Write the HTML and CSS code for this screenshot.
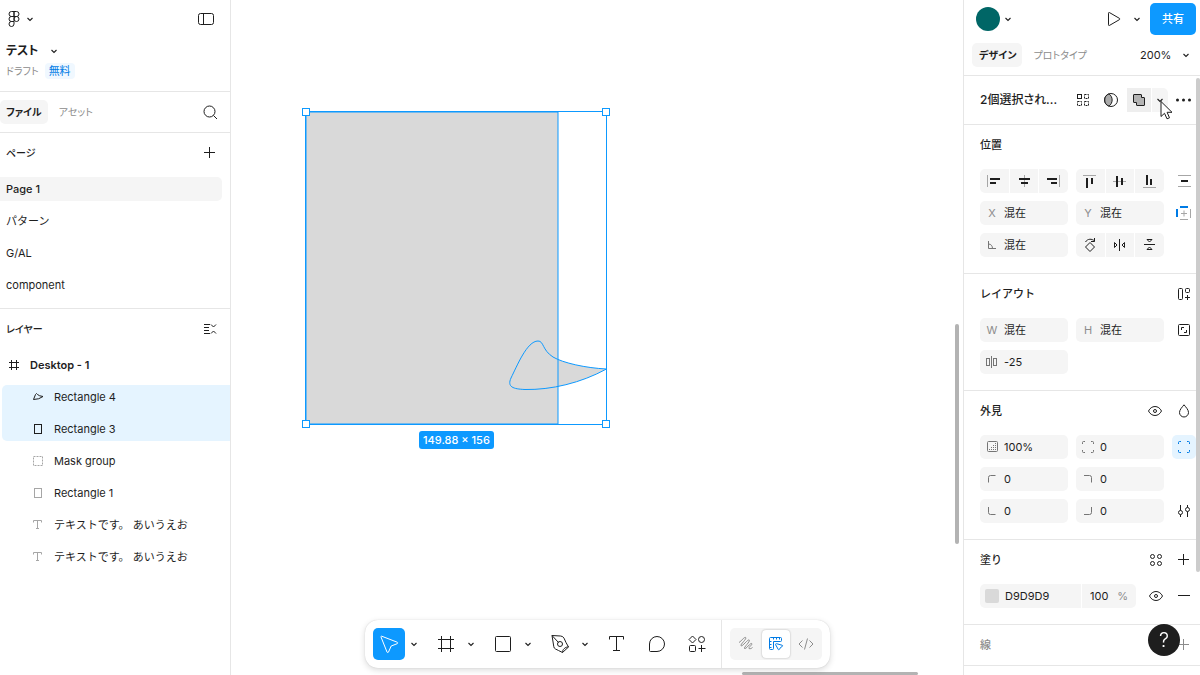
FILE: index.html
```html
<!DOCTYPE html>
<html lang="ja">

<head>
    <meta charset="UTF-8">
    <meta name="viewport" content="width=device-width, initial-scale=1.0">
    <title>テスト</title>
    <link rel="stylesheet" href="styles.css">
</head>

<body>
    <!-- Left sidebar -->
    <aside class="sidebar">
        <header class="file-header">
            <div class="logo-row">
                <button class="menu-button" aria-label="Menu">
                    <svg width="12" height="18" viewBox="0 0 12 18"><path d="M6 1.500H3.500a2.500 2.500 0 0 0 0 5H6zM6 1.500h2.500a2.500 2.500 0 0 1 0 5H6zM6 6.500H3.500a2.500 2.500 0 0 0 0 5H6zM6 11.500H3.500A2.500 2.500 0 1 0 6 14z" /><circle cx="8.500" cy="9" r="2.500" /></svg>
                    <svg class="chevron" width="8" height="8" viewBox="0 0 8 8"><path d="M1.500 3L4 5.500 6.500 3" /></svg>
                </button>
                <button class="icon-button" aria-label="Toggle sidebar">
                    <svg width="24" height="24" viewBox="0 0 24 24"><rect x="4.500" y="6.500" width="15" height="11" rx="2" /><path d="M9.500 6.500v11" /></svg>
                </button>
            </div>
            <button class="file-name">
                テスト
                <svg class="chevron" width="8" height="8" viewBox="0 0 8 8"><path d="M1.500 3L4 5.500 6.500 3" /></svg>
            </button>
            <div class="file-meta">
                <span class="folder">ドラフト</span>
                <span class="plan">無料</span>
            </div>
        </header>

        <div class="sidebar-tabs">
            <button class="tab active">ファイル</button>
            <button class="tab">アセット</button>
            <button class="icon-button" aria-label="Search">
                <svg width="24" height="24" viewBox="0 0 24 24"><circle cx="11.500" cy="11.500" r="5.500" /><path d="M15.500 15.500l3.500 3.500" /></svg>
            </button>
        </div>

        <section class="pages">
            <div class="sidebar-heading">
                <h2>ページ</h2>
                <button class="icon-button" aria-label="Add page">
                    <svg width="24" height="24" viewBox="0 0 24 24"><path d="M6 11.500h11M11.500 6v11" /></svg>
                </button>
            </div>
            <nav class="page-list">
                <a href="#" class="page current">Page 1</a>
                <a href="#" class="page">パターン</a>
                <a href="#" class="page">G/AL</a>
                <a href="#" class="page">component</a>
            </nav>
        </section>

        <section class="layers">
            <div class="sidebar-heading">
                <h2>レイヤー</h2>
                <button class="icon-button" aria-label="Collapse layers">
                    <svg width="24" height="24" viewBox="0 0 24 24"><path d="M6 7.500h6M6 10.500h5M6 13.500h5M6 16.500h6M13 7.500l2.500 2.500L18 7.500M13 16.500l2.500-2.500 2.500 2.500" /></svg>
                </button>
            </div>
            <div class="layer-list">
                <button class="layer frame">
                    <svg width="12" height="12" viewBox="0 0 12 12"><path d="M3.500 1v10M8.500 1v10M1 3.500h10M1 8.500h10" /></svg>
                    Desktop - 1
                </button>
                <div class="layer-group selected">
                    <button class="layer">
                        <svg width="12" height="12" viewBox="0 0 12 12"><path d="M1.500 8.500L3.500 3.500Q4.500 1.500 5.500 3.500 7 5 11 5.500 7 8.500 1.500 8.500z" /></svg>
                        Rectangle 4
                    </button>
                    <button class="layer">
                        <svg width="12" height="12" viewBox="0 0 12 12"><rect x="2.500" y="1.500" width="7" height="9" /></svg>
                        Rectangle 3
                    </button>
                </div>
                <div class="layer-group">
                    <button class="layer muted">
                        <svg width="12" height="12" viewBox="0 0 12 12"><rect x="1.500" y="1.500" width="9" height="9" stroke-dasharray="2 1" /></svg>
                        Mask group
                    </button>
                    <button class="layer muted">
                        <svg width="12" height="12" viewBox="0 0 12 12"><rect x="2.500" y="1.500" width="7" height="9" /></svg>
                        Rectangle 1
                    </button>
                    <button class="layer muted">
                        <svg width="12" height="12" viewBox="0 0 12 12"><path d="M1.500 3.500v-2h8v2M5.500 1.500v8M4 9.500h3" /></svg>
                        テキストです。 あいうえお
                    </button>
                    <button class="layer muted">
                        <svg width="12" height="12" viewBox="0 0 12 12"><path d="M1.500 3.500v-2h8v2M5.500 1.500v8M4 9.500h3" /></svg>
                        テキストです。 あいうえお
                    </button>
                </div>
            </div>
        </section>
    </aside>

    <!-- Canvas -->
    <main class="canvas">
        <svg class="artwork" width="310" height="322" viewBox="0 0 310 322">
            <path class="fill" d="M305.500 262C285 261 262 256 252 250C241 243 243 234 237 234C226 234 216 259 210 271C206 280 212 282 224 282.500C250 283 280 276 305.500 262z" />
            <rect class="fill" x="5" y="5" width="252" height="312" />
            <rect class="outline" x="5" y="5" width="252" height="312" />
            <path class="outline" d="M305.500 262C285 261 262 256 252 250C241 243 243 234 237 234C226 234 216 259 210 271C206 280 212 282 224 282.500C250 283 280 276 305.500 262z" />
            <rect class="bounds" x="4.500" y="4.500" width="301" height="313" />
            <g class="handles">
                <rect x="1.500" y="1.500" width="7" height="7" />
                <rect x="301.500" y="1.500" width="7" height="7" />
                <rect x="1.500" y="313.500" width="7" height="7" />
                <rect x="301.500" y="313.500" width="7" height="7" />
            </g>
        </svg>
        <div class="size-label">149.88 × 156</div>
        <div class="scroll-y"></div>
        <div class="scroll-x"></div>

        <div class="toolbar">
            <button class="tool active" aria-label="Move">
                <svg width="24" height="24" viewBox="0 0 24 24"><path d="M4.700 4.200l15.500 6a.800.800 0 0 1 0 1.500l-6 2.300-2.700 6a.800.800 0 0 1-1.500 0L4 5a.600.600 0 0 1 .700-.800z" /></svg>
            </button>
            <button class="tool-menu" aria-label="Move tools"><svg class="chevron" width="8" height="8" viewBox="0 0 8 8"><path d="M1.500 3L4 5.500 6.500 3" /></svg></button>
            <button class="tool" aria-label="Frame">
                <svg width="24" height="24" viewBox="0 0 24 24"><path d="M7.500 4v16M16.500 4v16M4 7.500h16M4 16.500h16" /></svg>
            </button>
            <button class="tool-menu" aria-label="Frame tools"><svg class="chevron" width="8" height="8" viewBox="0 0 8 8"><path d="M1.500 3L4 5.500 6.500 3" /></svg></button>
            <button class="tool" aria-label="Rectangle">
                <svg width="24" height="24" viewBox="0 0 24 24"><rect x="4.500" y="4.500" width="15" height="15" rx="1" /></svg>
            </button>
            <button class="tool-menu" aria-label="Shape tools"><svg class="chevron" width="8" height="8" viewBox="0 0 8 8"><path d="M1.500 3L4 5.500 6.500 3" /></svg></button>
            <button class="tool" aria-label="Pen">
                <svg width="24" height="24" viewBox="0 0 24 24"><path d="M4 3.500l8.500.500a4 4 0 0 1 3.500 2.200l2 4.300 2.500 4.500-6 5.500-4-2-3-1.500a3 3 0 0 1-1.700-2.300zM4 3.500l6.500 7M14.500 20.500c-.500-2.500 3-6 6-5.500" /><circle cx="12" cy="12" r="2.500" /></svg>
            </button>
            <button class="tool-menu" aria-label="Pen tools"><svg class="chevron" width="8" height="8" viewBox="0 0 8 8"><path d="M1.500 3L4 5.500 6.500 3" /></svg></button>
            <button class="tool" aria-label="Text">
                <svg width="24" height="24" viewBox="0 0 24 24"><path d="M4.500 7.500v-3h14v3M11.500 4.500v14M8 18.500h7" /></svg>
            </button>
            <button class="tool" aria-label="Comment">
                <svg width="24" height="24" viewBox="0 0 24 24"><path d="M12 4.500a7.500 7.500 0 1 1 0 15H5.500a1 1 0 0 1-1-1V12A7.500 7.500 0 0 1 12 4.500z" /></svg>
            </button>
            <button class="tool" aria-label="Actions">
                <svg width="24" height="24" viewBox="0 0 24 24"><path d="M7.500 4l3.500 3.500L7.500 11 4 7.500zM13.500 16.500h7M16.500 13v7" /><circle cx="16.500" cy="7.500" r="3" /><rect x="4.500" y="13.500" width="6" height="6" rx="1" /></svg>
            </button>
            <div class="mode-switch">
                <button class="mode" aria-label="Draw">
                    <svg width="24" height="24" viewBox="0 0 24 24"><path d="M5 10.500C7.500 9 10.500 4.500 11.700 5.500 13 7 6 12.500 7 13.700 8.500 15 13.800 6.800 15.200 8 16.500 9.500 9.500 15.500 10.500 16.500 12 17.500 16.500 10.500 17.700 11.500 19 12.500 14 15.500 15 16.500 16 17 17.500 16.500 18.500 15.500" /></svg>
                </button>
                <button class="mode active" aria-label="Design">
                    <svg width="24" height="24" viewBox="0 0 24 24"><path d="M6.500 5.500h10a1 1 0 0 1 1 1v2a1 1 0 0 1-1 1h-7v7a1 1 0 0 1-1 1h-2a1 1 0 0 1-1-1v-10a1 1 0 0 1 1-1zM9.500 7.500v-2M12.500 7.500v-2M15.500 7.500v-2M7.500 9.500h-2M7.500 12.500h-2M7.500 15.500h-2M11.500 12.500c0-.500.500-1 1-.800l5.500 1.500c.800.200.800 1 .200 1.300l-1.700 1-1 1.800c-.400.600-1.200.600-1.400-.100z" /></svg>
                </button>
                <button class="mode" aria-label="Dev mode">
                    <svg width="24" height="24" viewBox="0 0 24 24"><path d="M8.500 8.500L5 12l3.500 3.500M15.500 8.500L19 12l-3.500 3.500M13.500 6.500l-3 11" /></svg>
                </button>
            </div>
        </div>
    </main>

    <!-- Properties panel -->
    <aside class="inspector">
        <div class="account-row">
            <button class="account" aria-label="Account">
                <span class="avatar"></span>
                <svg class="chevron" width="8" height="8" viewBox="0 0 8 8"><path d="M1.500 3L4 5.500 6.500 3" /></svg>
            </button>
            <button class="icon-button" aria-label="Present">
                <svg width="24" height="24" viewBox="0 0 24 24"><path d="M6.500 6.200v11.600a.700.700 0 0 0 1 .600l10-5.800a.700.700 0 0 0 0-1.200l-10-5.800a.700.700 0 0 0-1 .600z" /></svg>
            </button>
            <button class="small-menu" aria-label="Present options"><svg class="chevron" width="8" height="8" viewBox="0 0 8 8"><path d="M1.500 3L4 5.500 6.500 3" /></svg></button>
            <button class="share">共有</button>
        </div>
        <div class="inspector-tabs">
            <button class="tab active">デザイン</button>
            <button class="tab">プロトタイプ</button>
            <label class="zoom">
                <select aria-label="Zoom">
                    <option>200%</option>
                </select>
                <svg class="chevron" width="8" height="8" viewBox="0 0 8 8"><path d="M1.500 3L4 5.500 6.500 3" /></svg>
            </label>
        </div>

        <div class="properties">
            <div class="scroll-thumb"></div>
            <div class="selection-row">
                <h1>2個選択され...</h1>
                <button class="icon-button" aria-label="Create component set">
                    <svg width="24" height="24" viewBox="0 0 24 24"><rect x="6.500" y="6.500" width="4" height="4" /><g stroke-dasharray="2 1"><rect x="13.500" y="6.500" width="4" height="4" /><rect x="6.500" y="13.500" width="4" height="4" /><rect x="13.500" y="13.500" width="4" height="4" /></g></svg>
                </button>
                <button class="icon-button" aria-label="Mask">
                    <svg width="24" height="24" viewBox="0 0 24 24"><circle cx="12" cy="12" r="6.500" /><path fill="#aaa" d="M10 5.900a6.500 6.500 0 0 0 0 12.200A7.500 7.500 0 0 0 10 5.900z" /></svg>
                </button>
                <div class="boolean">
                    <button class="icon-button" aria-label="Union">
                        <svg width="24" height="24" viewBox="0 0 24 24"><path fill="#b3b3b3" d="M7 6.500h7a.500.500 0 0 1 .500.500v2.500H17a.500.500 0 0 1 .500.500v7a.500.500 0 0 1-.500.500h-7a.500.500 0 0 1-.500-.500v-2.500H7a.500.500 0 0 1-.500-.500V7a.500.500 0 0 1 .500-.500z" /></svg>
                    </button>
                    <button class="small-menu" aria-label="Boolean operations"><svg class="chevron" width="8" height="8" viewBox="0 0 8 8"><path d="M1.500 3L4 5.500 6.500 3" /></svg></button>
                    <svg class="cursor" width="13" height="20" viewBox="0 0 13 20"><path d="M1 1.500v15l3.500-3.200L7 18.800l2.500-1-2.400-5.500H12z" /></svg>
                </div>
                <button class="icon-button" aria-label="More">
                    <svg class="solid" width="24" height="24" viewBox="0 0 24 24"><circle cx="5.500" cy="12" r="1.500" /><circle cx="11.500" cy="12" r="1.500" /><circle cx="17.500" cy="12" r="1.500" /></svg>
                </button>
            </div>

            <section class="property-section">
                <div class="section-heading">
                    <h2>位置</h2>
                </div>
                <div class="fields">
                    <div class="segments">
                        <button aria-label="Align left"><svg width="24" height="24" viewBox="0 0 24 24"><path class="faint" d="M5.500 6v12" /><path class="thick" d="M8 10h10M8 14h6" /></svg></button>
                        <button aria-label="Align center"><svg width="24" height="24" viewBox="0 0 24 24"><path class="faint" d="M12.500 6v12" /><path class="thick" d="M7 10h11M9 14h7" /></svg></button>
                        <button aria-label="Align right"><svg width="24" height="24" viewBox="0 0 24 24"><path class="faint" d="M18.500 6v12" /><path class="thick" d="M6 10h10M10 14h6" /></svg></button>
                    </div>
                    <div class="segments">
                        <button aria-label="Align top"><svg width="24" height="24" viewBox="0 0 24 24"><path class="faint" d="M5 6.500h13" /><path class="thick" d="M9 9v10M14 9v6" /></svg></button>
                        <button aria-label="Align middle"><svg width="24" height="24" viewBox="0 0 24 24"><path class="faint" d="M5 12.500h13" /><path class="thick" d="M9 7v11M14 9v7" /></svg></button>
                        <button aria-label="Align bottom"><svg width="24" height="24" viewBox="0 0 24 24"><path class="faint" d="M6 18.500h13" /><path class="thick" d="M10 6v10M14 10v6" /></svg></button>
                    </div>
                    <button class="icon-button" aria-label="Distribute">
                        <svg width="24" height="24" viewBox="0 0 24 24"><path class="faint" d="M6 6.500h13M6 17.500h13" /><path class="thick" d="M9 12h7" /></svg>
                    </button>

                    <label class="field"><span class="prefix">X</span><input type="text" value="混在"></label>
                    <label class="field"><span class="prefix">Y</span><input type="text" value="混在"></label>
                    <button class="icon-button" aria-label="Constraints">
                        <svg width="24" height="24" viewBox="0 0 24 24"><path class="faint" d="M9 12.500h6M12 9.500v6M18.500 8v9M8 18.500h8" /><path class="blue thick" d="M5 8v8M8 6h8" /></svg>
                    </button>

                    <label class="field"><svg width="24" height="24" viewBox="0 0 24 24" aria-label="Rotation"><path d="M8.500 8v7.500H16M8.500 11c2.500 0 4 2 4 4.500" /></svg><input type="text" value="混在"></label>
                    <div class="segments">
                        <button aria-label="Rotate"><svg width="24" height="24" viewBox="0 0 24 24"><path d="M12 9.500l4.500 4.500-4.500 4.500L7.500 14zM7.500 9c2-3.500 6.500-3.500 9-1M16.500 5v3.500H13" /></svg></button>
                        <button aria-label="Flip horizontal"><svg width="24" height="24" viewBox="0 0 24 24"><path d="M11.500 6v12M6.500 9.500v5l2.500-2.500zM16.500 9.500v5L14 12z" /></svg></button>
                        <button aria-label="Flip vertical"><svg width="24" height="24" viewBox="0 0 24 24"><path d="M7 11.500h11M10 6.500h5L12.500 9zM10 16.500h5L12.500 14z" /></svg></button>
                    </div>
                </div>
            </section>

            <section class="property-section">
                <div class="section-heading">
                    <h2>レイアウト</h2>
                    <button class="icon-button" aria-label="Auto layout">
                        <svg width="24" height="24" viewBox="0 0 24 24"><rect x="6.500" y="6.500" width="4" height="11" rx="1" /><rect x="13.500" y="6.500" width="4" height="4" rx="1" /><path d="M15.500 13v5M13 15.500h5" /></svg>
                    </button>
                </div>
                <div class="fields">
                    <label class="field"><span class="prefix">W</span><input type="text" value="混在"></label>
                    <label class="field"><span class="prefix">H</span><input type="text" value="混在"></label>
                    <button class="icon-button" aria-label="Lock ratio">
                        <svg width="24" height="24" viewBox="0 0 24 24"><rect x="6.500" y="6.500" width="11" height="11" rx="1" /><path d="M9.500 12V9.500H12M14.500 12v2.500H12" /></svg>
                    </button>
                    <label class="field"><svg width="24" height="24" viewBox="0 0 24 24" aria-label="Spacing"><path d="M11.500 6v12" /><rect x="6.500" y="8.500" width="3" height="7" /><rect x="13.500" y="8.500" width="3" height="7" /></svg><input type="text" value="-25"></label>
                </div>
            </section>

            <section class="property-section">
                <div class="section-heading">
                    <h2>外見</h2>
                    <button class="icon-button" aria-label="Visibility">
                        <svg width="24" height="24" viewBox="0 0 24 24"><path d="M4.500 12c1.300-2.700 3.700-4.500 6.500-4.500s5.200 1.800 6.500 4.500c-1.300 2.700-3.700 4.500-6.500 4.500S5.800 14.700 4.500 12z" /><circle cx="11" cy="12" r="1.500" /></svg>
                    </button>
                    <button class="icon-button" aria-label="Blend mode">
                        <svg width="24" height="24" viewBox="0 0 24 24"><path d="M12 5.800c-2 2.500-4.500 5-4.500 7.700a4.500 4.500 0 0 0 9 0c0-2.700-2.500-5.200-4.500-7.700z" /></svg>
                    </button>
                </div>
                <div class="fields">
                    <label class="field"><svg width="24" height="24" viewBox="0 0 24 24" aria-label="Opacity"><rect x="7.500" y="6.500" width="10" height="10" rx="1" /><path stroke-dasharray="1 1" d="M15.500 8v8M13.500 10v6M11.500 12v4M9.500 14v2" /></svg><input type="text" value="100%"></label>
                    <label class="field"><svg width="24" height="24" viewBox="0 0 24 24" aria-label="Corner radius"><path d="M6.500 9V7.500a1 1 0 0 1 1-1H9M15 6.500h1.500a1 1 0 0 1 1 1V9M17.500 15v1.500a1 1 0 0 1-1 1H15M9 17.500H7.500a1 1 0 0 1-1-1V15" /></svg><input type="text" value="0"></label>
                    <button class="icon-button on" aria-label="Individual corners">
                        <svg width="24" height="24" viewBox="0 0 24 24"><path d="M6.500 9V7.500a1 1 0 0 1 1-1H9M15 6.500h1.500a1 1 0 0 1 1 1V9M17.500 15v1.500a1 1 0 0 1-1 1H15M9 17.500H7.500a1 1 0 0 1-1-1V15" /></svg>
                    </button>
                    <label class="field"><svg width="24" height="24" viewBox="0 0 24 24" aria-label="Top left"><path d="M8.500 15.500v-5a2 2 0 0 1 2-2h5" /></svg><input type="text" value="0"></label>
                    <label class="field"><svg width="24" height="24" viewBox="0 0 24 24" aria-label="Top right"><path d="M8 8.500h5.500a2 2 0 0 1 2 2v5" /></svg><input type="text" value="0"></label>
                    <span></span>
                    <label class="field"><svg width="24" height="24" viewBox="0 0 24 24" aria-label="Bottom left"><path d="M8.500 8v5.500a2 2 0 0 0 2 2h5" /></svg><input type="text" value="0"></label>
                    <label class="field"><svg width="24" height="24" viewBox="0 0 24 24" aria-label="Bottom right"><path d="M8 15.500h5.500a2 2 0 0 0 2-2V8" /></svg><input type="text" value="0"></label>
                    <button class="icon-button" aria-label="Corner smoothing">
                        <svg width="24" height="24" viewBox="0 0 24 24"><path d="M8.500 6v5.500M8.500 15.500V18M15.500 6v2.500M15.500 12.500V18" /><circle cx="8.500" cy="13.500" r="2" /><circle cx="15.500" cy="10.500" r="2" /></svg>
                    </button>
                </div>
            </section>

            <section class="property-section">
                <div class="section-heading">
                    <h2>塗り</h2>
                    <button class="icon-button" aria-label="Styles">
                        <svg width="24" height="24" viewBox="0 0 24 24"><circle cx="8.500" cy="8.500" r="2" /><circle cx="15.500" cy="8.500" r="2" /><circle cx="8.500" cy="15.500" r="2" /><circle cx="15.500" cy="15.500" r="2" /></svg>
                    </button>
                    <button class="icon-button" aria-label="Add fill">
                        <svg width="24" height="24" viewBox="0 0 24 24"><path d="M6 11.500h11M11.500 6v11" /></svg>
                    </button>
                </div>
                <div class="fill-row">
                    <label class="field color"><span class="swatch"></span><input type="text" value="D9D9D9" aria-label="Color"></label>
                    <label class="field opacity"><input type="text" value="100" aria-label="Opacity"><span class="unit">%</span></label>
                    <button class="icon-button" aria-label="Toggle fill">
                        <svg width="24" height="24" viewBox="0 0 24 24"><path d="M5.500 12c1.300-2.700 3.700-4.500 6.500-4.500s5.200 1.800 6.500 4.500c-1.300 2.700-3.700 4.500-6.500 4.500S6.800 14.700 5.500 12z" /><circle cx="12" cy="12" r="1.500" /></svg>
                    </button>
                    <button class="icon-button" aria-label="Remove fill">
                        <svg width="24" height="24" viewBox="0 0 24 24"><path d="M6 11.500h12" /></svg>
                    </button>
                </div>
            </section>

            <section class="property-section empty">
                <div class="section-heading">
                    <h2>線</h2>
                    <button class="icon-button" aria-label="Add stroke">
                        <svg width="24" height="24" viewBox="0 0 24 24"><path d="M6 11.500h11M11.500 6v11" /></svg>
                    </button>
                </div>
            </section>
        </div>
    </aside>

    <button class="help" aria-label="Help">?</button>
</body>

</html>
```
FILE: styles.css
```css
* {
    box-sizing: border-box;
}

body {
    display: flex;
    height: 100vh;
    margin: 0;
    overflow: hidden;
    font-family: Inter, "Noto Sans CJK JP", sans-serif;
    font-size: 11px;
    line-height: 16px;
    color: #1e1e1e;
    background-color: #fff;
}

h1,
h2 {
    margin: 0;
    font-size: 11px;
    font-weight: 500;
}

button,
input,
select {
    margin: 0;
    padding: 0;
    border: none;
    background: none;
    color: inherit;
    font: inherit;
}

svg {
    display: block;
    flex: none;
    fill: none;
    stroke: currentColor;
    stroke-width: 1;
}

svg.solid {
    fill: currentColor;
    stroke: none;
}

.chevron {
    stroke-width: 1.1;
}

.faint {
    stroke: #a6a6a6;
}

.thick {
    stroke-width: 2;
}

.blue {
    stroke: #007be5;
}

.icon-button,
.small-menu,
.tool,
.tool-menu,
.mode {
    display: flex;
    flex: none;
    align-items: center;
    justify-content: center;
}

.icon-button {
    width: 24px;
    height: 24px;
    border-radius: 5px;
}

.icon-button.on {
    background-color: #e5f4ff;
    color: #007be5;
}

.small-menu {
    width: 16px;
    height: 24px;
}

/* Proportional kana for the compact labels */
.tab,
.file-name,
.folder,
.sidebar-heading h2,
.selection-row h1 {
    font-feature-settings: "palt";
}

.tab {
    height: 24px;
    padding: 0 6px 0 7px;
    border-radius: 5px;
    color: #8c8c8c;
    font-size: 10px;
    white-space: nowrap;
}

.tab.active {
    background-color: #f5f5f5;
    color: #1e1e1e;
    font-weight: 600;
}

/* Left sidebar */
.sidebar {
    flex: none;
    width: 231px;
    border-right: 1px solid #e6e6e6;
}

.file-header {
    padding: 0 12px 12px 6px;
    border-bottom: 1px solid #e6e6e6;
}

.logo-row {
    display: flex;
    align-items: center;
    justify-content: space-between;
    height: 38px;
}

.menu-button {
    display: flex;
    align-items: center;
    gap: 6px;
    padding-left: 2px;
}

.file-name {
    display: flex;
    align-items: center;
    gap: 12px;
    height: 18px;
    margin: 4px 0 3px;
    font-size: 12px;
    font-weight: 600;
}

.file-meta {
    display: flex;
    align-items: center;
    gap: 6px;
    color: #8c8c8c;
}

.folder {
    font-size: 10px;
}

.plan {
    padding: 0 4px;
    border-radius: 4px;
    background-color: #f0f8ff;
    color: #007be5;
}

.sidebar-tabs {
    display: flex;
    align-items: center;
    gap: 4px;
    height: 41px;
    padding-right: 8px;
    border-bottom: 1px solid #e6e6e6;
}

.sidebar-tabs .tab.active {
    padding-left: 6px;
}

.sidebar-tabs .icon-button {
    margin-left: auto;
}

.pages {
    padding: 0 8px 11px 0;
    border-bottom: 1px solid #e6e6e6;
}

.sidebar-heading {
    display: flex;
    align-items: center;
    justify-content: space-between;
    height: 40px;
    padding-left: 6px;
}

.sidebar-heading h2 {
    font-size: 10px;
}

.layers .sidebar-heading {
    padding-right: 8px;
}

.page-list {
    display: grid;
    gap: 8px;
    padding-top: 4px;
}

.page {
    padding: 4px 6px;
    border-radius: 0 5px 5px 0;
    color: inherit;
    text-decoration: none;
}

.page.current {
    background-color: #f5f5f5;
    font-weight: 500;
}

.layer-list,
.layer-group {
    display: grid;
    gap: 8px;
}

.layer-list {
    padding-top: 4px;
}

.layer-group {
    margin-left: 2px;
    border-radius: 5px 0 0 5px;
}

.layer-group.selected {
    background-color: #e5f4ff;
}

.layer {
    display: flex;
    align-items: center;
    gap: 10px;
    height: 24px;
    padding-left: 30px;
    white-space: nowrap;
}

.layer.frame {
    padding-left: 8px;
    font-weight: 600;
}

.layer.muted svg {
    color: #a6a6a6;
}

/* Canvas */
.canvas {
    position: relative;
    flex: 1;
    min-width: 0;
    overflow: hidden;
}

.artwork {
    position: absolute;
    top: 107px;
    left: 70px;
}

.fill {
    fill: #d9d9d9;
    stroke: none;
}

.outline,
.bounds {
    stroke: #0d99ff;
}

.handles {
    fill: #fff;
    stroke: #0d99ff;
}

.size-label {
    position: absolute;
    top: 431px;
    left: 188px;
    padding: 1px 4px;
    border-radius: 3px;
    background-color: #0d99ff;
    color: #fff;
    font-weight: 500;
}

.scroll-y,
.scroll-x {
    position: absolute;
    border-radius: 2px;
    background-color: #b3b3b3;
}

.scroll-y {
    top: 324px;
    right: 4px;
    width: 4px;
    height: 220px;
}

.scroll-x {
    bottom: 0;
    left: 511px;
    width: 176px;
    height: 3px;
}

.toolbar {
    position: absolute;
    right: 0;
    bottom: 7px;
    left: 1px;
    display: flex;
    align-items: center;
    width: max-content;
    height: 48px;
    margin: 0 auto;
    padding: 0 8px;
    border-radius: 13px;
    background-color: #fff;
    box-shadow: 0 0 1px rgba(0, 0, 0, 0.2), 0 2px 6px rgba(0, 0, 0, 0.15);
}

.tool {
    width: 32px;
    height: 32px;
    margin-right: 8px;
    border-radius: 5px;
}

.tool:has(+ .tool-menu) {
    margin-right: 0;
}

.tool.active {
    background-color: #0d99ff;
    color: #fff;
}

.tool-menu {
    width: 17px;
    height: 32px;
    margin-right: 8px;
}

.mode-switch {
    position: relative;
    display: flex;
    gap: 2px;
    margin-left: 9px;
    padding: 2px;
    border-radius: 5px;
    background-color: #f5f5f5;
}

.mode-switch::before {
    content: "";
    position: absolute;
    top: -8px;
    bottom: -8px;
    left: -9px;
    width: 1px;
    background-color: #e6e6e6;
}

.mode {
    width: 28px;
    height: 28px;
    border-radius: 4px;
    color: #8c8c8c;
}

.mode.active {
    background-color: #fff;
    color: #007be5;
    box-shadow: 0 0 2px rgba(0, 0, 0, 0.3);
}

/* Properties panel */
.inspector {
    flex: none;
    width: 237px;
    border-left: 1px solid #e6e6e6;
}

.account-row {
    display: flex;
    align-items: center;
    height: 38px;
    padding: 0 4px 0 12px;
}

.account {
    display: flex;
    align-items: center;
    gap: 4px;
    margin-right: auto;
}

.avatar {
    width: 24px;
    height: 24px;
    border-radius: 50%;
    background-color: #006666;
}

.account-row .small-menu {
    margin: 0 5px 0 3px;
}

.share {
    width: 46px;
    height: 32px;
    border-radius: 5px;
    background-color: #0d99ff;
    color: #fff;
    font-weight: 500;
}

.inspector-tabs {
    display: flex;
    align-items: center;
    gap: 4px;
    height: 38px;
    padding: 0 10px 4px 8px;
    border-bottom: 1px solid #e6e6e6;
}

.zoom {
    display: flex;
    align-items: center;
    gap: 10px;
    margin-left: auto;
}

.zoom select {
    appearance: none;
}

.properties {
    position: relative;
}

.scroll-thumb {
    position: absolute;
    top: 2px;
    right: 0;
    width: 4px;
    height: 494px;
    border-radius: 2px;
    background-color: #cccccc;
}

.selection-row {
    display: flex;
    align-items: center;
    gap: 4px;
    height: 49px;
    padding: 0 4px 0 16px;
    border-bottom: 1px solid #e6e6e6;
}

.selection-row h1 {
    flex: 1;
    min-width: 0;
    overflow: hidden;
    font-size: 12px;
    white-space: nowrap;
}

.boolean {
    position: relative;
    display: flex;
    gap: 1px;
}

.boolean button {
    border-radius: 0 5px 5px 0;
    background-color: #f5f5f5;
}

.boolean .icon-button {
    border-radius: 0;
    background-color: #eeeeee;
}

.cursor {
    position: absolute;
    top: 12px;
    left: 33px;
    fill: #fff;
}

.property-section {
    padding: 0 4px 16px 16px;
    border-bottom: 1px solid #e6e6e6;
}

.property-section.empty {
    padding-bottom: 0;
    color: #8c8c8c;
}

.section-heading {
    display: flex;
    align-items: center;
    gap: 4px;
    height: 40px;
}

.section-heading h2 {
    margin-right: auto;
}

.fields {
    display: grid;
    grid-template-columns: 1fr 1fr 24px;
    gap: 8px;
    padding-top: 4px;
}

.segments {
    display: flex;
    gap: 1px;
}

.segments button {
    display: flex;
    flex: 1;
    height: 24px;
    padding-left: 2px;
    background-color: #f5f5f5;
}

.segments button:first-child {
    border-radius: 5px 0 0 5px;
}

.segments button:last-child {
    border-radius: 0 5px 5px 0;
}

.field {
    display: flex;
    align-items: center;
    height: 24px;
    border-radius: 5px;
    background-color: #f5f5f5;
}

.field svg {
    color: #757575;
}

.field input {
    flex: 1;
    width: 0;
    min-width: 0;
    outline: none;
}

.prefix {
    width: 24px;
    color: #8c8c8c;
    text-align: center;
}

.fill-row {
    display: flex;
    gap: 4px;
    padding-top: 4px;
}

.fill-row .color {
    flex: 1;
    margin-right: -3px;
    border-radius: 5px 0 0 5px;
}

.fill-row .opacity {
    width: 54px;
    margin-right: 4px;
    padding: 0 8px;
    border-radius: 0 5px 5px 0;
}

.swatch {
    width: 14px;
    height: 14px;
    margin: 0 6px 0 5px;
    border-radius: 2px;
    background-color: #d9d9d9;
}

.unit {
    color: #8c8c8c;
}

.help {
    position: fixed;
    right: 20px;
    bottom: 19px;
    width: 32px;
    height: 32px;
    border-radius: 50%;
    background-color: #1e1e1e;
    color: #fff;
    font-size: 20px;
    font-weight: 300;
    line-height: 32px;
}
```
